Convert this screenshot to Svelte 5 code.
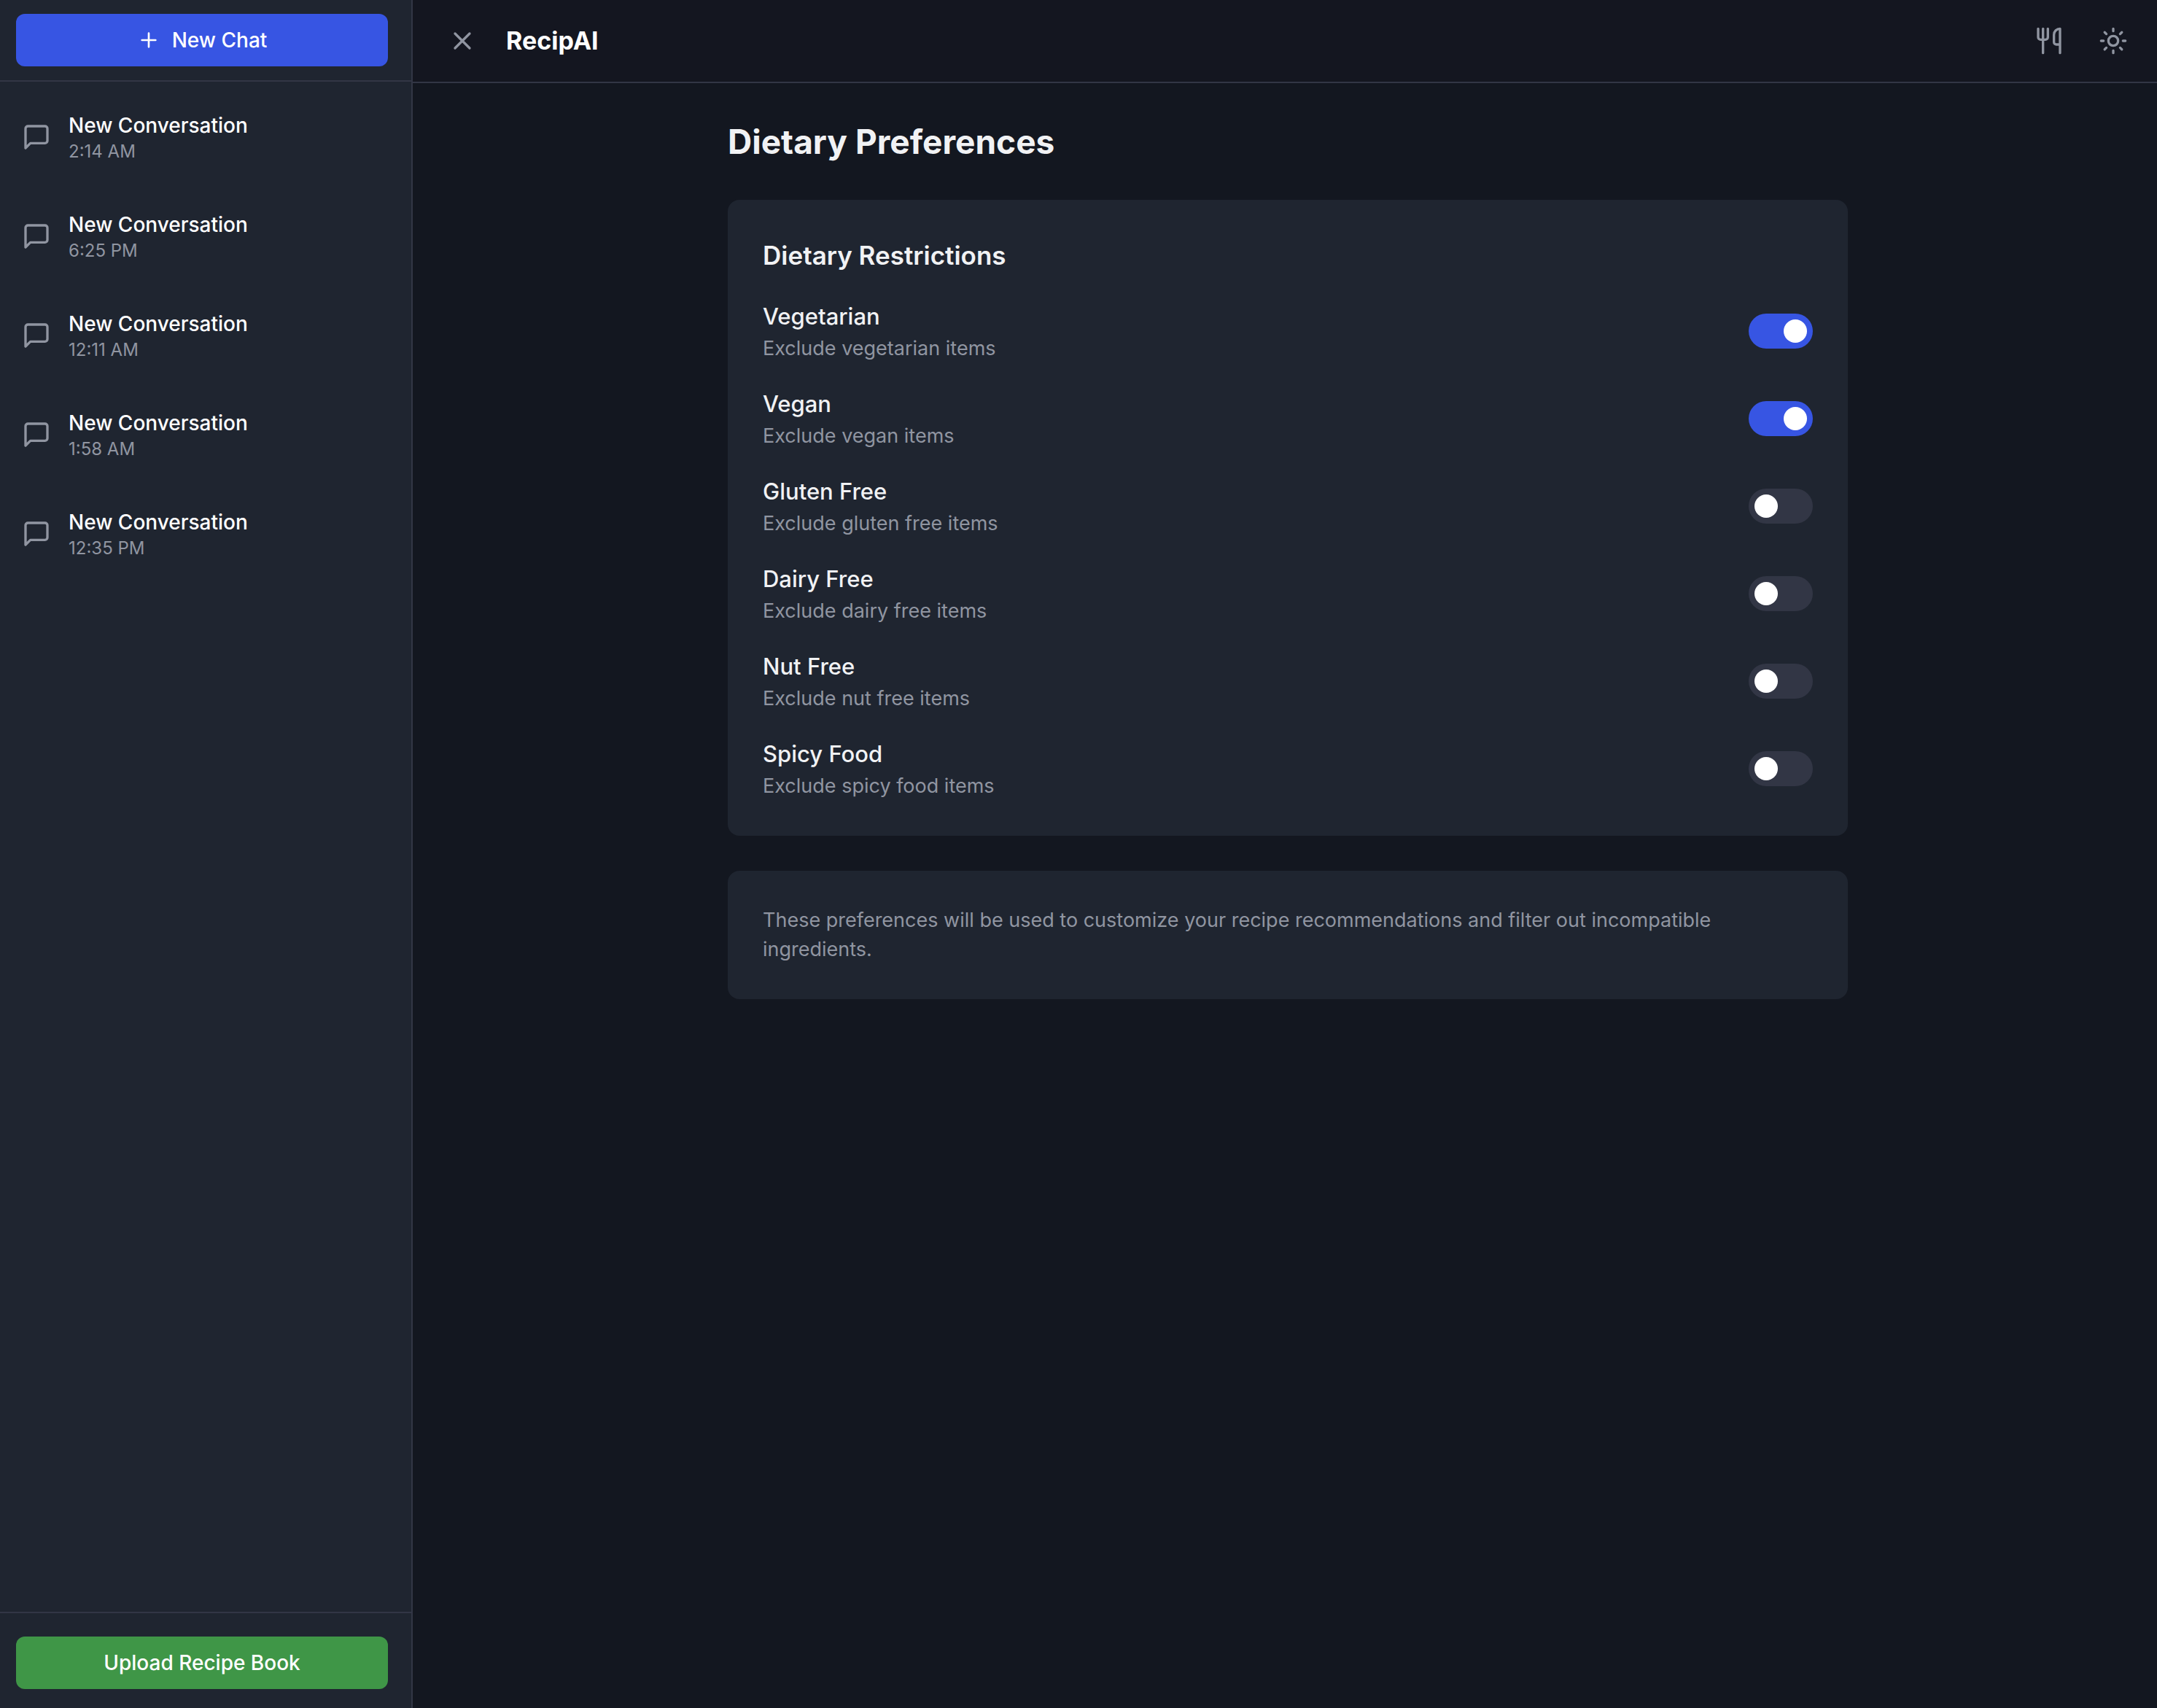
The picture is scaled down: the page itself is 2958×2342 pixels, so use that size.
<script>
  const conversations = [
    { title: 'New Conversation', time: '2:14 AM' },
    { title: 'New Conversation', time: '6:25 PM' },
    { title: 'New Conversation', time: '12:11 AM' },
    { title: 'New Conversation', time: '1:58 AM' },
    { title: 'New Conversation', time: '12:35 PM' },
  ];

  let restrictions = $state([
    { id: 'vegetarian', name: 'Vegetarian', on: true },
    { id: 'vegan', name: 'Vegan', on: true },
    { id: 'gluten-free', name: 'Gluten Free', on: false },
    { id: 'dairy-free', name: 'Dairy Free', on: false },
    { id: 'nut-free', name: 'Nut Free', on: false },
    { id: 'spicy-food', name: 'Spicy Food', on: false },
  ]);
</script>

<div class="app">
  <aside class="sidebar">
    <div class="sidebar-top">
      <button class="action primary" type="button">
        <svg class="icon small" viewBox="0 0 24 24" aria-hidden="true">
          <path d="M5 12h14M12 5v14" />
        </svg>
        New Chat
      </button>
    </div>

    <nav class="conversations" aria-label="Conversations">
      {#each conversations as chat}
        <button class="conversation" type="button">
          <svg class="icon" viewBox="0 0 24 24" aria-hidden="true">
            <path d="M21 15a2 2 0 0 1-2 2H7l-4 4V5a2 2 0 0 1 2-2h14a2 2 0 0 1 2 2z" />
          </svg>
          <span class="conversation-text">
            <span class="conversation-title">{chat.title}</span>
            <span class="conversation-time">{chat.time}</span>
          </span>
        </button>
      {/each}
    </nav>

    <div class="sidebar-bottom">
      <button class="action upload" type="button">Upload Recipe Book</button>
    </div>
  </aside>

  <div class="main">
    <header class="topbar">
      <button class="icon-button" type="button" aria-label="Close sidebar">
        <svg class="icon" viewBox="0 0 24 24" aria-hidden="true">
          <path d="M18 6 6 18M6 6l12 12" />
        </svg>
      </button>
      <h1 class="brand">RecipAI</h1>
      <div class="tools">
        <button class="icon-button" type="button" aria-label="Dietary preferences">
          <svg class="icon" viewBox="0 0 24 24" aria-hidden="true">
            <path d="M3 2v7c0 1.1.9 2 2 2h4a2 2 0 0 0 2-2V2" />
            <path d="M7 2v20" />
            <path d="M21 15V2a5 5 0 0 0-5 5v6c0 1.1.9 2 2 2h3Zm0 0v7" />
          </svg>
        </button>
        <button class="icon-button" type="button" aria-label="Switch to light theme">
          <svg class="icon" viewBox="0 0 24 24" aria-hidden="true">
            <circle cx="12" cy="12" r="4" />
            <path d="M12 2v2M12 20v2M4.93 4.93l1.41 1.41M17.66 17.66l1.41 1.41M2 12h2M20 12h2M6.34 17.66l-1.41 1.41M19.07 4.93l-1.41 1.41" />
          </svg>
        </button>
      </div>
    </header>

    <main class="content">
      <div class="column">
        <h2 class="page-title">Dietary Preferences</h2>

        <section class="card">
          <h3 class="card-title">Dietary Restrictions</h3>
          <div class="rows">
            {#each restrictions as item (item.id)}
              <div class="row">
                <div>
                  <label class="row-name" for={item.id}>{item.name}</label>
                  <p class="muted" id="{item.id}-hint">Exclude {item.name.toLowerCase()} items</p>
                </div>
                <input
                  class="switch"
                  type="checkbox"
                  role="switch"
                  id={item.id}
                  aria-describedby="{item.id}-hint"
                  bind:checked={item.on}
                />
              </div>
            {/each}
          </div>
        </section>

        <section class="card">
          <p class="muted note">
            These preferences will be used to customize your recipe recommendations and filter out
            incompatible ingredients.
          </p>
        </section>
      </div>
    </main>
  </div>
</div>

<style>
  :global(body) {
    margin: 0;
    background: #131720;
  }

  .app {
    display: flex;
    min-height: 100vh;
    font-family: Inter, 'Liberation Sans', sans-serif;
    font-size: 28px;
    line-height: 40px;
    color: #f1f2f4;
    background: #131720;
  }

  h1, h2, h3, p {
    margin: 0;
  }

  button {
    border: 0;
    font: inherit;
    color: inherit;
    background: none;
    cursor: pointer;
  }

  .icon {
    flex: none;
    display: block;
    width: 40px;
    height: 40px;
    fill: none;
    stroke: currentColor;
    stroke-width: 2;
    stroke-linecap: round;
    stroke-linejoin: round;
  }

  .icon.small {
    width: 32px;
    height: 32px;
  }

  .sidebar {
    flex: none;
    display: flex;
    flex-direction: column;
    box-sizing: border-box;
    width: 566px;
    border-right: 2px solid #323645;
    background: #1f2530;
  }

  .sidebar-top {
    padding: 19px 32px 19px 22px;
    border-bottom: 2px solid #323645;
  }

  .sidebar-bottom {
    padding: 32px 32px 26px 22px;
    border-top: 2px solid #323645;
  }

  .action {
    display: flex;
    align-items: center;
    justify-content: center;
    gap: 16px;
    width: 100%;
    padding: 16px;
    border-radius: 12px;
    font-weight: 500;
    color: #fff;
  }

  .primary {
    background: #3755e3;
  }

  .upload {
    background: #3f9647;
  }

  .conversations {
    flex: 1;
    padding: 8px 0;
  }

  .conversation {
    display: flex;
    align-items: center;
    gap: 24px;
    width: 100%;
    padding: 32px 30px;
    text-align: left;
    color: #9095a1;
  }

  .conversation-text {
    display: flex;
    flex-direction: column;
  }

  .conversation-title {
    font-weight: 500;
    color: #fff;
  }

  .conversation-time {
    font-size: 24px;
    line-height: 32px;
  }

  .main {
    flex: 1;
    display: flex;
    flex-direction: column;
    min-width: 0;
  }

  .topbar {
    display: flex;
    align-items: center;
    padding: 20px 24px 20px 32px;
    border-bottom: 2px solid #323645;
    background: #141620;
  }

  .icon-button {
    padding: 16px;
    color: #9095a1;
  }

  .brand {
    margin-left: 24px;
    font-size: 34px;
    line-height: 56px;
    font-weight: 700;
    color: #fff;
  }

  .tools {
    display: flex;
    gap: 16px;
    margin-left: auto;
  }

  .content {
    padding: 48px 48px 48px 56px;
  }

  .column {
    display: flex;
    flex-direction: column;
    gap: 48px;
    max-width: 1536px;
    margin: 0 auto;
  }

  .page-title {
    font-size: 46px;
    line-height: 64px;
    font-weight: 700;
  }

  .card {
    padding: 48px;
    border-radius: 16px;
    background: #1f2530;
  }

  .card-title {
    margin-bottom: 32px;
    font-size: 35px;
    line-height: 56px;
    font-weight: 600;
  }

  .rows {
    display: flex;
    flex-direction: column;
    gap: 32px;
  }

  .row {
    display: flex;
    align-items: center;
    justify-content: space-between;
    gap: 32px;
  }

  .row-name {
    display: block;
    font-size: 31px;
    line-height: 48px;
    font-weight: 500;
  }

  .muted {
    font-size: 27px;
    color: #9095a1;
  }

  /* Keeps the sentence at a comfortable measure inside the card. */
  .note {
    max-width: 1400px;
  }

  .switch {
    appearance: none;
    flex: none;
    box-sizing: border-box;
    width: 88px;
    height: 48px;
    margin: 0;
    padding: 8px;
    border-radius: 24px;
    background: #323645;
    cursor: pointer;
  }

  .switch::before {
    content: '';
    display: block;
    width: 32px;
    height: 32px;
    border-radius: 50%;
    background: #fff;
  }

  .switch:checked {
    background: #3755e3;
  }

  .switch:checked::before {
    margin-left: auto;
  }
</style>
